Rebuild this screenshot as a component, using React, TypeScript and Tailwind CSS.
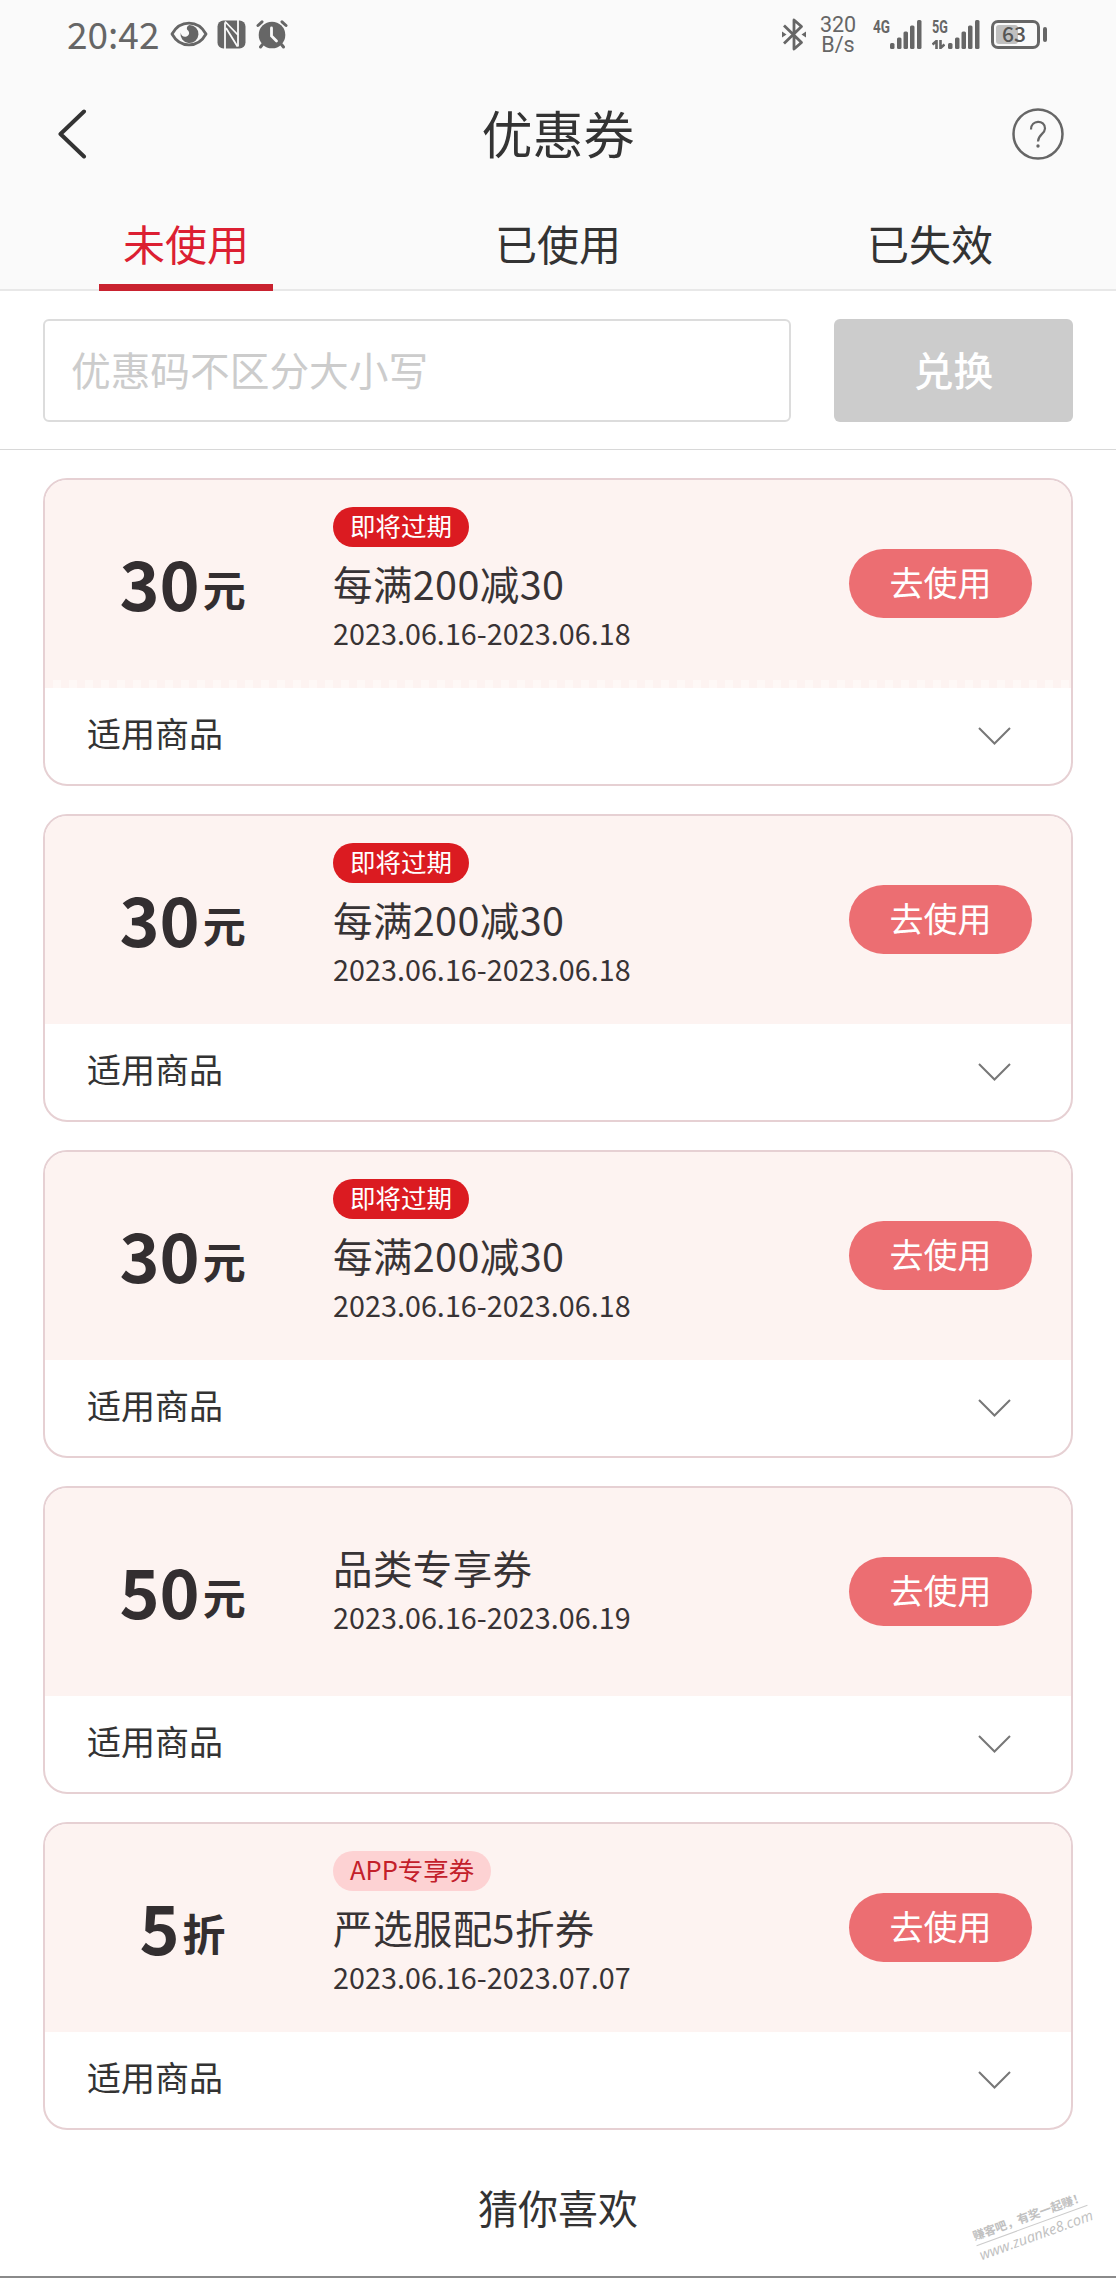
import React, { useState } from "react";

const tabs = ["未使用", "已使用", "已失效"];

const coupons = [
  { value: "30", unit: "元", badge: "即将过期", badgeType: "solid", title: "每满200减30", date: "2023.06.16-2023.06.18" },
  { value: "30", unit: "元", badge: "即将过期", badgeType: "solid", title: "每满200减30", date: "2023.06.16-2023.06.18" },
  { value: "30", unit: "元", badge: "即将过期", badgeType: "solid", title: "每满200减30", date: "2023.06.16-2023.06.18" },
  { value: "50", unit: "元", badge: "", badgeType: "", title: "品类专享券", date: "2023.06.16-2023.06.19" },
  { value: "5", unit: "折", badge: "APP专享券", badgeType: "light", title: "严选服配5折券", date: "2023.06.16-2023.07.07" },
];

function SignalBars() {
  return (
    <svg width="32" height="29" viewBox="0 0 32 29" fill="#666">
      <rect x="0" y="23" width="4.500" height="6" rx="1.500" />
      <rect x="7" y="17.500" width="4.500" height="11.500" rx="1.500" />
      <rect x="13.500" y="11.500" width="4.500" height="17.500" rx="1.500" />
      <rect x="20" y="5.500" width="4.500" height="23.500" rx="1.500" />
      <rect x="27" y="0" width="4.500" height="29" rx="1.500" />
    </svg>
  );
}

function StatusBar() {
  return (
    <div className="flex h-[68px] items-center justify-between pl-[67px] pr-[69px] text-[#666]">
      <div className="flex items-center">
        <span className="w-[93px] whitespace-nowrap pb-[2px] text-[37px] leading-[66px]">20:42</span>
        {/* eye */}
        <svg className="ml-[10px]" width="38" height="26" viewBox="0 0 38 26">
          <path d="M2 13C10-1.500 28-1.500 36 13C28 27.500 10 27.500 2 13Z" fill="none" stroke="#666" strokeWidth="2.800" strokeLinejoin="round" />
          <path d="M19.500 4A9 9 0 1 1 10.600 11.500C11 15 14 16.500 16.500 15.500C19.500 14.500 20 11 17.500 9C16.500 8 16.500 5 19.500 4Z" fill="#666" />
        </svg>
        {/* nfc */}
        <svg className="ml-[9px]" width="29" height="29" viewBox="0 0 29 29">
          <rect x="0.500" y="0.500" width="28" height="28" rx="6" fill="#666" />
          <path d="M8 29V2.500M21 0V26.500" stroke="#fafafa" strokeWidth="1.800" />
          <path d="M8 1.500L21 15M9 8L20.500 26.500" stroke="#fafafa" strokeWidth="1.800" />
        </svg>
        {/* alarm */}
        <svg className="ml-[10px]" width="32" height="29" viewBox="0 0 32 29">
          <circle cx="16" cy="15" r="13.300" fill="#666" />
          <path d="M2 5.500L6 1.800M30 5.500L26 1.800M6.500 24.500L4.500 27M25.500 24.500l2 2.500" stroke="#666" strokeWidth="3" strokeLinecap="round" />
          <path d="M15.500 8V16L20.500 21" fill="none" stroke="#fafafa" strokeWidth="2.800" strokeLinecap="round" />
        </svg>
      </div>

      <div className="flex items-center">
        {/* bluetooth */}
        <svg width="24" height="33" viewBox="0 0 24 33" fill="none" stroke="#666" strokeWidth="2.800">
          <path d="M2 7.500L19.500 24.500L12 31V2L19.500 8.500L2 25.500" strokeLinejoin="round" />
          <path d="M0 13.500L4.500 16.500L0 19.500ZM24 13.500L19.500 16.500L24 19.500Z" fill="#666" stroke="none" />
        </svg>
        <div className="ml-[13px] w-[38px] pt-[2px] text-center font-['Roboto',sans-serif] text-[21.500px] leading-[20px]">
          <div>320</div>
          <div>B/s</div>
        </div>
        <div className="ml-[16px] flex h-[29px]">
          <span className="w-[17px] origin-left scale-x-[0.750] font-['Roboto',sans-serif] text-[18px] font-bold leading-[14px]">4G</span>
          <SignalBars />
        </div>
        <div className="ml-[10px] flex h-[29px]">
          <div className="w-[16px]">
            <div className="origin-left scale-x-[0.700] font-['Roboto',sans-serif] text-[18px] font-bold leading-[14px]">5G</div>
            <svg className="mt-[6px]" width="13" height="9" viewBox="0 0 13 9" fill="none" stroke="#666" strokeWidth="2.600">
              <path d="M4.500 9V1L0.500 4.500M8.500 0V8L12.500 4.500" />
            </svg>
          </div>
          <SignalBars />
        </div>
        <div className="ml-[11px] flex items-center">
          <div className="flex h-[29px] w-[49px] items-center rounded-[7px] border-[3px] border-[#666] p-[2px]">
            <div className="flex h-[19px] w-[22px] items-center whitespace-nowrap rounded-[3px] bg-[#c0c0c0] pb-[2px] pl-[6px] text-[21px] font-medium leading-[17px] text-[#555]">
              63
            </div>
          </div>
          <div className="ml-[3px] h-[15px] w-[4px] rounded-[2px] bg-[#666]" />
        </div>
      </div>
    </div>
  );
}

function CouponCard({ coupon, perforated }: { coupon: (typeof coupons)[number]; perforated: boolean }) {
  return (
    <div className="h-[308px] overflow-hidden rounded-[24px] border-2 border-[#e6d0d3] bg-white">
      <div className="relative flex h-[208px] items-center bg-[#fdf3f1]">
        <div className="flex w-[288px] items-baseline justify-center pb-[5px] pr-[13px] font-bold text-[#332e30]">
          <span className="text-[68px] leading-[80px]">{coupon.value}</span>
          <span className="ml-[3px] text-[43px] leading-[60px]">
            <span className="inline-block -translate-y-[4px]">{coupon.unit}</span>
          </span>
        </div>
        <div className="flex flex-1 flex-col items-start pb-[5px]">
          {coupon.badge && (
            <span
              className={`mb-[9px] h-[40px] rounded-full px-[17px] text-[25.500px] leading-[36px] ${
                coupon.badgeType === "solid" ? "bg-[#db1b21] text-white" : "bg-[#fdd2d3] text-[#c3202a]"
              }`}
            >
              {coupon.badge}
            </span>
          )}
          <span className="text-[39.500px] leading-[54px] tracking-[0.4px] text-[#383335]">{coupon.title}</span>
          <span className="text-[28.700px] leading-[46px] tracking-[0.05px] text-[#383335]">{coupon.date}</span>
        </div>
        <button className="mb-[2px] mr-[39px] h-[69px] w-[183px] rounded-full bg-[#ec6e72] pb-[3px] text-[34px] leading-[62px] text-white">
          去使用
        </button>
        {perforated && (
          <div className="absolute inset-x-0 bottom-0 h-[8px] bg-[repeating-linear-gradient(90deg,#fdf3f1_0px,#fdf3f1_8px,#fef8f6_8px,#fef8f6_16px)]" />
        )}
      </div>
      <div className="flex h-[95px] items-center justify-between pl-[42px] pr-[60px]">
        <span className="pb-[7px] text-[34px] text-[#333]">适用商品</span>
        <svg width="33" height="18" viewBox="0 0 33 18" fill="none" stroke="#777" strokeWidth="2">
          <path d="M1 1L16.500 16.500L32 1" />
        </svg>
      </div>
    </div>
  );
}

export default function App() {
  const [active, setActive] = useState(0);

  return (
    <div className="relative flex h-[2278px] w-[1116px] flex-col overflow-hidden border-b-2 border-[#8a8a8a] bg-white font-['Noto_Sans_CJK_SC',sans-serif]">
      <header className="h-[291px] shrink-0 border-b-2 border-[#e8e8e8] bg-[#fafafa]">
        <StatusBar />
        <div className="flex h-[132px] items-center pl-[58px] pr-[52px]">
          <div className="flex flex-1">
            <svg width="29" height="50" viewBox="0 0 29 50" fill="none" stroke="#333" strokeWidth="4" strokeLinecap="round" strokeLinejoin="round">
              <path d="M26 2.500L2.500 25L26 47.500" />
            </svg>
          </div>
          <h1 className="pb-[4px] pr-[6px] text-[51px] text-[#333]">优惠券</h1>
          <div className="flex flex-1 justify-end">
            <svg width="52" height="52" viewBox="0 0 52 52" fill="none" stroke="#666" strokeWidth="2.500">
              <circle cx="26" cy="26" r="24.500" />
              <path d="M19 21.500C19 11.500 33 11.500 33 20.500C33 26 26 26.500 26 33.500" strokeWidth="2.200" />
              <circle cx="26" cy="38" r="1.700" fill="#666" stroke="none" />
            </svg>
          </div>
        </div>
        <div className="flex h-[91px]">
          {tabs.map((tab, index) => (
            <button
              key={tab}
              onClick={() => setActive(index)}
              className={`flex flex-1 flex-col items-center justify-between text-[42px] leading-[86px] ${
                active === index ? "text-[#dc1f32]" : "text-[#333]"
              }`}
            >
              <span className="h-[84px]">{tab}</span>
              {active === index && <span className="h-[7px] w-[174px] shrink-0 bg-[#c9222f]" />}
            </button>
          ))}
        </div>
      </header>

      <div className="flex h-[159px] shrink-0 items-center justify-between border-b border-[#d8d8d8] px-[43px]">
        <input
          placeholder="优惠码不区分大小写"
          className="h-[103px] w-[748px] rounded-[6px] border-2 border-[#dcdcdc] px-[26px] pb-[4px] text-[39.700px] outline-none placeholder:text-[#ccc]"
        />
        <button className="h-[103px] w-[239px] rounded-[6px] bg-[#ccc] pb-[3px] text-[39.700px] font-medium text-white">兑换</button>
      </div>

      <div className="flex flex-col gap-[28px] px-[43px] pt-[28px]">
        {coupons.map((coupon, index) => (
          <CouponCard key={index} coupon={coupon} perforated={index === 0} />
        ))}
      </div>

      <h2 className="mt-[47px] text-center text-[40px] leading-[60px] text-[#333]">猜你喜欢</h2>

      <div className="absolute left-[973px] top-[2205px] w-[118px] -rotate-[20deg] text-center text-[#c0c0c0]">
        <div className="whitespace-nowrap border-b border-[#ccc] text-[11.800px] font-bold leading-[20px]">赚客吧，有奖一起赚！</div>
        <div className="font-['Open_Sans',sans-serif] text-[14.500px] italic leading-[20px]">www.zuanke8.com</div>
      </div>
    </div>
  );
}
